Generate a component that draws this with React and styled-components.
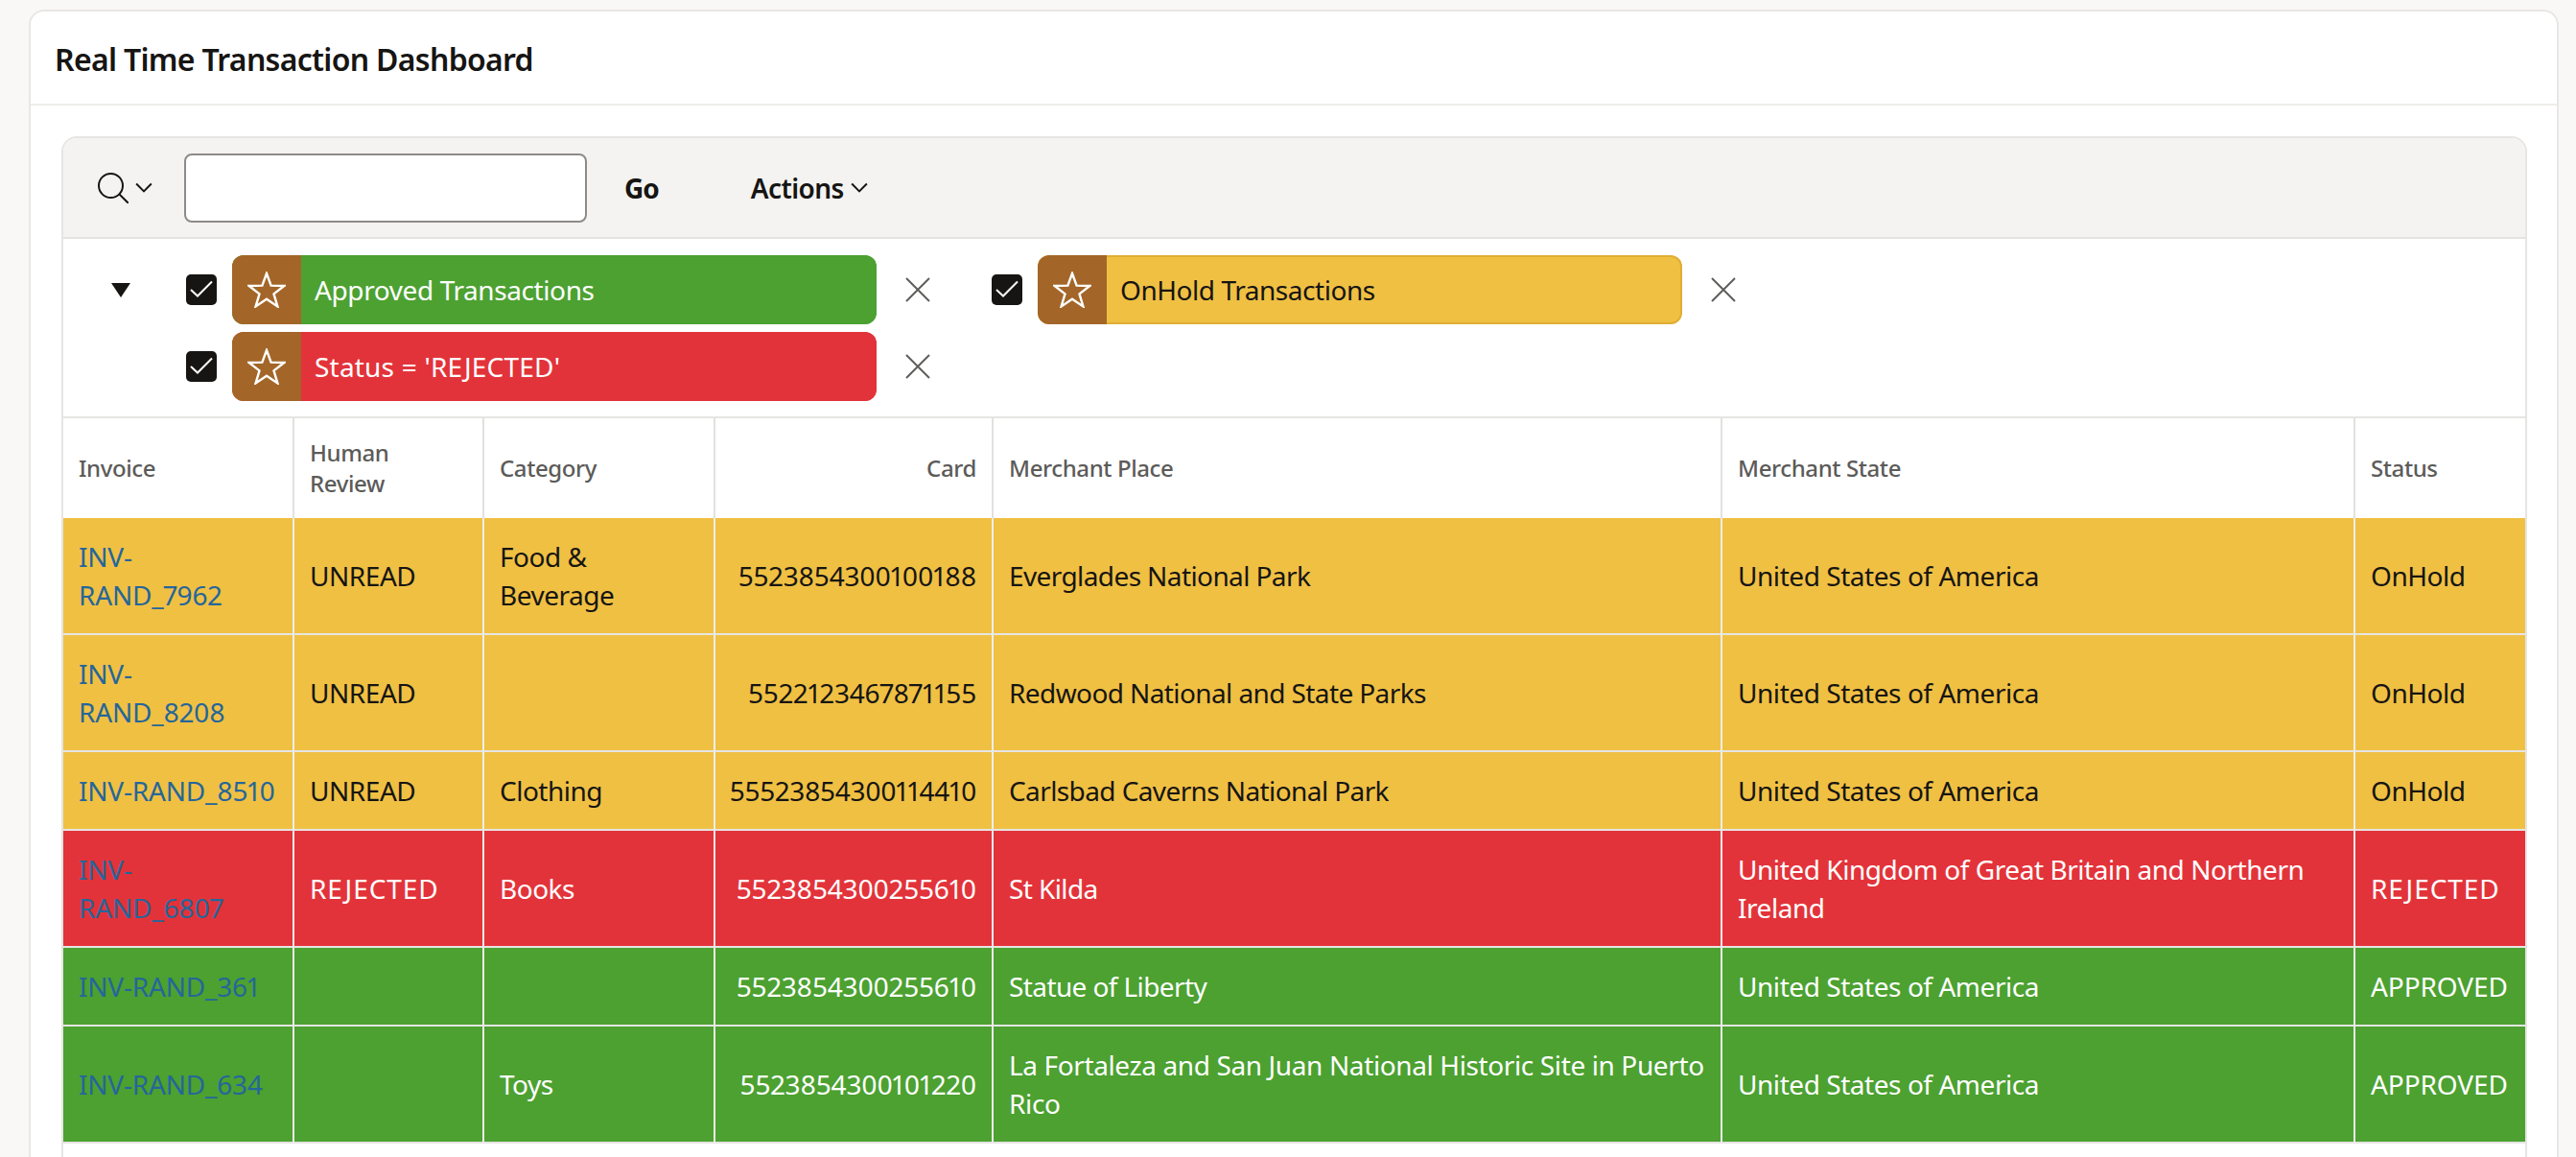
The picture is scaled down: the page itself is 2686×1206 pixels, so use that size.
import React from "react";
import styled, { createGlobalStyle } from "styled-components";

const GlobalStyle = createGlobalStyle`
  html, body {
    margin: 0;
    height: 100%;
    overflow: hidden;
    background: #f9f8f6;
  }
  body {
    font-family: "Noto Sans", "Open Sans", sans-serif;
    font-variant-numeric: proportional-nums;
    color: #161513;
  }
`;

const Page = styled.div`
  height: 1206px;
  overflow: hidden;
  padding: 10px 18px 0 30px;
  box-sizing: border-box;
`;

const Card = styled.section`
  min-height: 1300px;
  background: #fff;
  border: 2px solid #e8e7e5;
  border-radius: 16px;
`;

const CardHeader = styled.header`
  height: 96px;
  display: flex;
  align-items: center;
  padding-left: 25px;
  border-bottom: 2px solid #eeedeb;
`;

const Title = styled.h1`
  margin: 2px 0 0;
  font-size: 32px;
  font-weight: 600;
  letter-spacing: -0.7px;
`;

const CardBody = styled.div`
  padding: 32px 31px 0 32px;
`;

const Report = styled.div`
  border: 2px solid #e6e5e3;
  border-bottom: none;
  border-radius: 16px 16px 0 0;
  min-height: 1200px;
`;

const Toolbar = styled.div`
  height: 103px;
  display: flex;
  align-items: center;
  background: #f4f3f1;
  border-bottom: 2px solid #e4e3e1;
  border-radius: 14px 14px 0 0;
  padding-left: 36px;
`;

const SearchMenu = styled.div`
  width: 91px;
  display: flex;
  align-items: center;
  gap: 7px;
`;

const SearchInput = styled.input`
  width: 420px;
  height: 72px;
  margin-left: -1px;
  box-sizing: border-box;
  border: 2px solid #8c8b89;
  border-radius: 8px;
  background: #fff;
`;

const ToolbarButton = styled.button`
  margin-left: ${({ $gap }) => $gap}px;
  padding: 0;
  display: flex;
  align-items: center;
  gap: 7px;
  border: none;
  background: none;
  color: #161513;
  font-family: inherit;
  font-size: 28px;
  font-weight: ${({ $bold }) => ($bold ? 700 : 600)};
  letter-spacing: ${({ $bold }) => ($bold ? -1 : -0.6)}px;
`;

const Filters = styled.div`
  height: 187px;
  box-sizing: border-box;
  display: flex;
  padding: 17px 0 0 50px;
  border-bottom: 2px solid #e6e5e3;
`;

const Collapse = styled.div`
  width: 78px;
  height: 72px;
  display: flex;
  align-items: center;
`;

const FilterList = styled.div`
  display: flex;
  flex-wrap: wrap;
  width: 1680px;
  row-gap: 8px;
  align-content: flex-start;
`;

const FilterItem = styled.div`
  width: 840px;
  height: 72px;
  display: flex;
  align-items: center;
`;

const Check = styled.span`
  width: 32px;
  height: 32px;
  margin-right: 16px;
  display: flex;
  align-items: center;
  justify-content: center;
  background: #161513;
  border-radius: 5px;
`;

const Chip = styled.div`
  width: 672px;
  height: 72px;
  display: flex;
  border-radius: 12px;
  overflow: hidden;
  background: ${({ $bg }) => $bg};
  color: ${({ $fg }) => $fg};
`;

const ChipIcon = styled.span`
  width: 72px;
  flex: none;
  display: flex;
  align-items: center;
  justify-content: center;
  background: #a36628;
`;

const ChipLabel = styled.span`
  flex: 1;
  padding-left: 14px;
  display: flex;
  align-items: center;
  font-size: 28px;
  letter-spacing: ${({ $spacing }) => $spacing}px;
  border: 2px solid ${({ $edge }) => $edge};
  border-left: none;
  border-radius: 0 12px 12px 0;
`;

const Remove = styled.span`
  margin-left: 30px;
  display: flex;
`;

const Table = styled.table`
  width: 100%;
  table-layout: fixed;
  border-collapse: separate;
  border-spacing: 0;
`;

const Th = styled.th`
  padding: 20px 16px;
  font-size: 24px;
  line-height: 32px;
  font-weight: 500;
  letter-spacing: -0.4px;
  color: #5c5b59;
  text-align: ${({ $right }) => ($right ? "right" : "left")};
  border-left: ${({ $first }) => ($first ? "none" : "2px solid #e2e1df")};
`;

const Row = styled.tr`
  background: ${({ $bg }) => $bg};
  color: ${({ $fg }) => $fg};
`;

const Td = styled.td`
  padding: 20px 16px;
  padding-left: ${({ $right }) => ($right ? 4 : 16)}px;
  font-size: 28px;
  line-height: 40px;
  letter-spacing: ${({ $spacing = -0.5 }) => $spacing}px;
  text-align: ${({ $right }) => ($right ? "right" : "left")};
  border-left: ${({ $first }) => ($first ? "none" : "2px solid #efeeec")};
  border-bottom: 2px solid #e6e5e3;
`;

const InvoiceLink = styled.a`
  display: inline-block;
  color: #25669a;
  max-width: ${({ $broken }) => ($broken ? "190px" : "none")};
  white-space: ${({ $broken }) => ($broken ? "normal" : "nowrap")};
`;

const StarIcon = () => (
  <svg width="40" height="38" viewBox="0 0 40 38" fill="none" stroke="#fff" strokeWidth="2.4" strokeLinejoin="miter">
    <path d="M20 2 L24.6 14.6 L38.4 15 L27.5 23.4 L31.4 36.4 L20 28.8 L8.6 36.4 L12.5 23.4 L1.6 15 L15.4 14.6 Z" />
  </svg>
);

const CheckMark = () => (
  <svg width="32" height="32" viewBox="0 0 32 32" fill="none" stroke="#fff" strokeWidth="2">
    <path d="M5 16 L12 22.5 L27 7.5" />
  </svg>
);

const CloseIcon = () => (
  <svg width="26" height="26" viewBox="0 0 26 26" fill="none" stroke="#5f5e5c" strokeWidth="2">
    <path d="M1 1 L25 25 M25 1 L1 25" />
  </svg>
);

const Chevron = ({ size = 18 }) => (
  <svg width={size} height={size * 0.6} viewBox="0 0 18 11" fill="none" stroke="#161513" strokeWidth="2">
    <path d="M1 1.5 L9 9.5 L17 1.5" />
  </svg>
);

const SearchIcon = () => (
  <svg width="32" height="32" viewBox="0 0 32 32" fill="none" stroke="#161513" strokeWidth="2">
    <circle cx="13.5" cy="13.5" r="12.5" />
    <path d="M22.5 22.5 L32 32" />
  </svg>
);

const Triangle = () => (
  <svg width="20" height="15" viewBox="0 0 20 15" fill="#161513">
    <path d="M0 0 H20 L10 15 Z" />
  </svg>
);

const filters = [
  { label: "Approved Transactions", bg: "#4ca131", edge: "#4ca131", fg: "#fff", spacing: -0.4 },
  { label: "OnHold Transactions", bg: "#f0c043", edge: "#dfae36", fg: "#161513", spacing: -0.45 },
  { label: "Status = 'REJECTED'", bg: "#e3333a", edge: "#e3333a", fg: "#fff", spacing: 0.2 },
];

const gold = { bg: "#f0c043", fg: "#161513" };
const red = { bg: "#e3333a", fg: "#fff" };
const green = { bg: "#4ca131", fg: "#fff" };

const US = "United States of America";

const rows = [
  { ...gold, invoice: "INV-RAND_7962", broken: true, review: "UNREAD", category: "Food & Beverage", card: "5523854300100188", place: "Everglades National Park", state: US, status: "OnHold" },
  { ...gold, invoice: "INV-RAND_8208", broken: true, review: "UNREAD", category: "", card: "5522123467871155", place: "Redwood National and State Parks", state: US, status: "OnHold" },
  { ...gold, invoice: "INV-RAND_8510", review: "UNREAD", category: "Clothing", card: "55523854300114410", cardSpacing: -0.3, place: "Carlsbad Caverns National Park", state: US, status: "OnHold" },
  { ...red, invoice: "INV-RAND_6807", broken: true, review: "REJECTED", category: "Books", card: "5523854300255610", place: "St Kilda", state: "United Kingdom of Great Britain and Northern Ireland", status: "REJECTED" },
  { ...green, invoice: "INV-RAND_361", review: "", category: "", card: "5523854300255610", place: "Statue of Liberty", state: US, status: "APPROVED" },
  { ...green, invoice: "INV-RAND_634", review: "", category: "Toys", card: "5523854300101220", place: "La Fortaleza and San Juan National Historic Site in Puerto Rico", placeSpacing: -0.38, state: US, status: "APPROVED" },
];

const capsSpacing = (text) => (text === "REJECTED" ? 0.95 : text === "APPROVED" ? -0.1 : -0.45);

const App = () => {
  return (
    <Page>
      <GlobalStyle />
      <Card>
        <CardHeader>
          <Title>Real Time Transaction Dashboard</Title>
        </CardHeader>
        <CardBody>
          <Report>
            <Toolbar>
              <SearchMenu>
                <SearchIcon />
                <Chevron />
              </SearchMenu>
              <SearchInput />
              <ToolbarButton $gap={39} $bold>Go</ToolbarButton>
              <ToolbarButton $gap={96}>
                Actions <Chevron />
              </ToolbarButton>
            </Toolbar>
            <Filters>
              <Collapse>
                <Triangle />
              </Collapse>
              <FilterList>
                {filters.map((f) => (
                  <FilterItem key={f.label}>
                    <Check>
                      <CheckMark />
                    </Check>
                    <Chip $bg={f.bg} $fg={f.fg}>
                      <ChipIcon>
                        <StarIcon />
                      </ChipIcon>
                      <ChipLabel $edge={f.edge} $spacing={f.spacing}>{f.label}</ChipLabel>
                    </Chip>
                    <Remove>
                      <CloseIcon />
                    </Remove>
                  </FilterItem>
                ))}
              </FilterList>
            </Filters>
            <Table>
              <colgroup>
                <col width="239" />
                <col width="198" />
                <col width="241" />
                <col width="290" />
                <col width="760" />
                <col width="660" />
                <col />
              </colgroup>
              <thead>
                <tr>
                  <Th $first>Invoice</Th>
                  <Th>Human Review</Th>
                  <Th>Category</Th>
                  <Th $right>Card</Th>
                  <Th>Merchant Place</Th>
                  <Th>Merchant State</Th>
                  <Th>Status</Th>
                </tr>
              </thead>
              <tbody>
                {rows.map((r) => (
                  <Row key={r.invoice} $bg={r.bg} $fg={r.fg}>
                    <Td $first $spacing={-0.2}>
                      <InvoiceLink $broken={r.broken}>{r.invoice}</InvoiceLink>
                    </Td>
                    <Td $spacing={capsSpacing(r.review)}>{r.review}</Td>
                    <Td>{r.category}</Td>
                    <Td $right $spacing={r.cardSpacing ?? -0.18}>{r.card}</Td>
                    <Td $spacing={r.placeSpacing ?? -0.6}>{r.place}</Td>
                    <Td $spacing={-0.45}>{r.state}</Td>
                    <Td $spacing={capsSpacing(r.status)}>{r.status}</Td>
                  </Row>
                ))}
              </tbody>
            </Table>
          </Report>
        </CardBody>
      </Card>
    </Page>
  );
};

export default App;
